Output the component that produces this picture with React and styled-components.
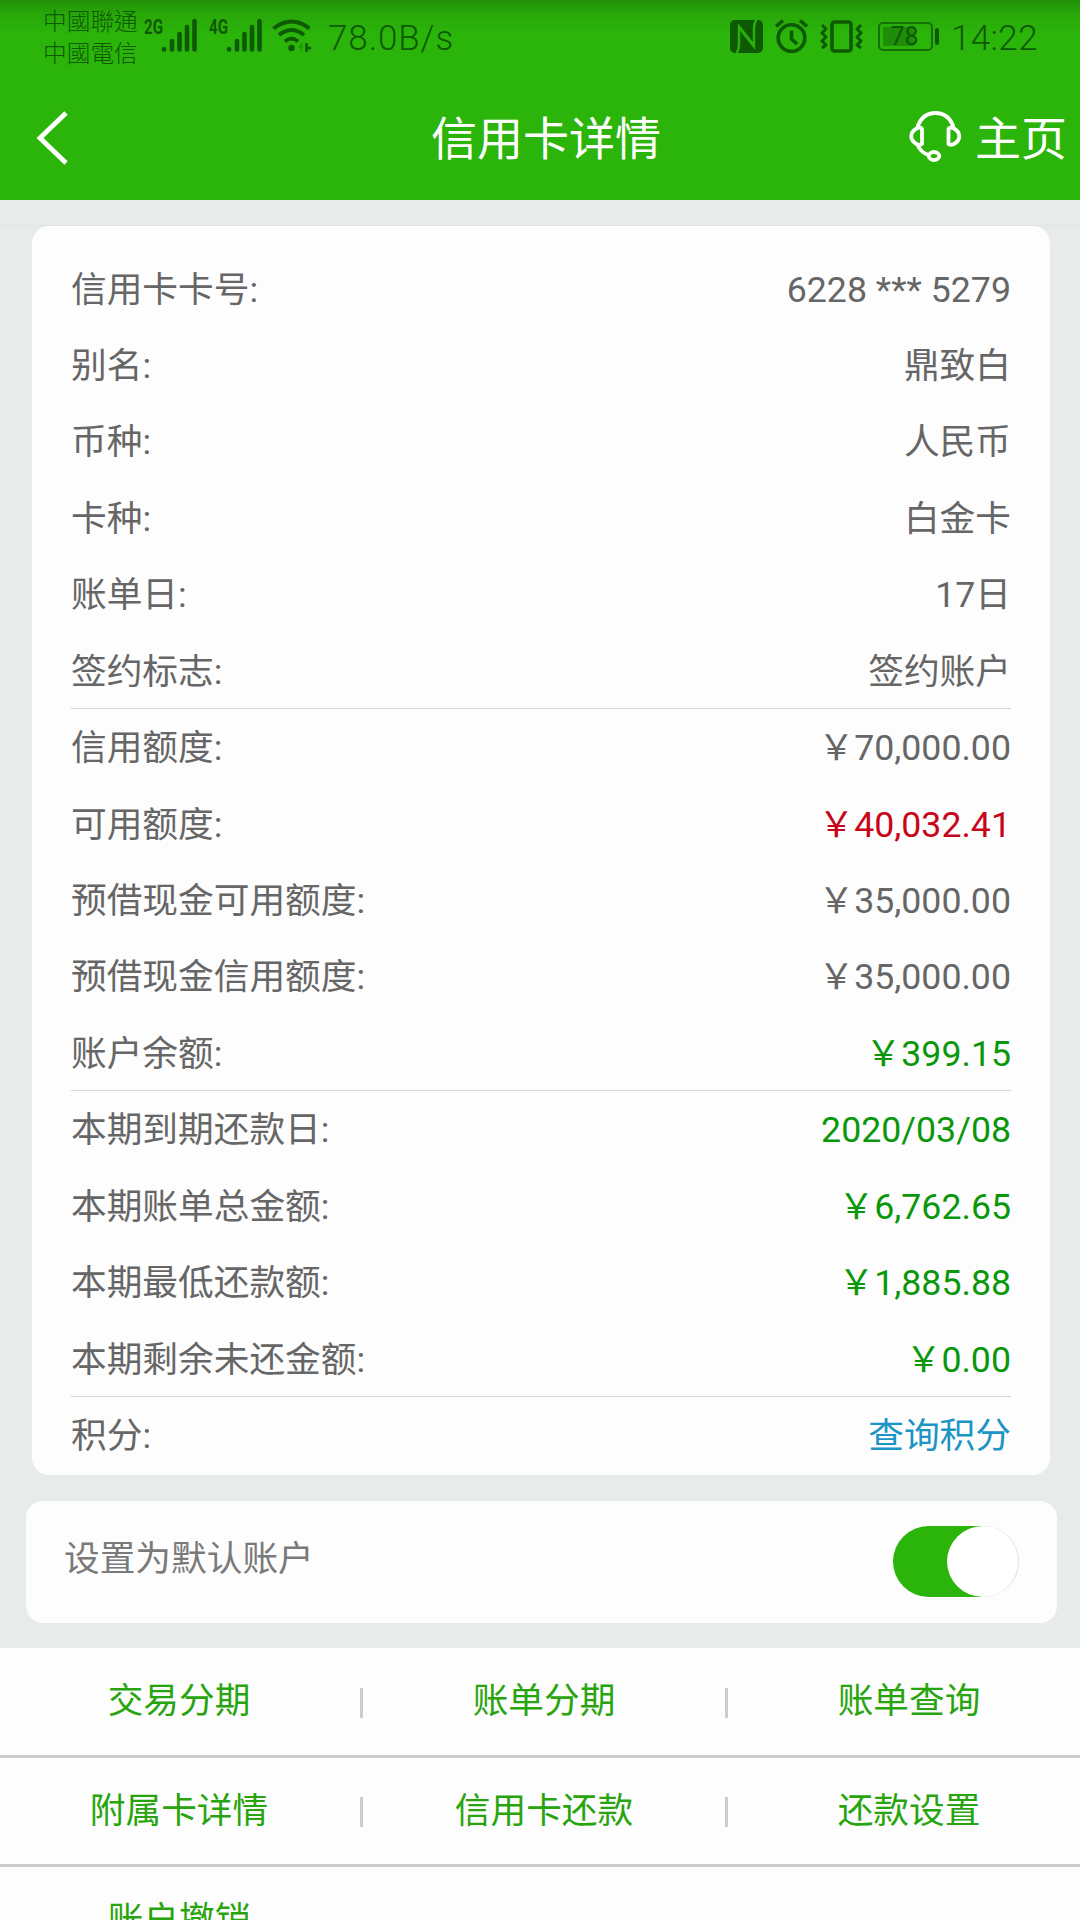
import React, { useState } from 'react';
import styled, { createGlobalStyle } from 'styled-components';

const GlobalStyle = createGlobalStyle`
  * {
    box-sizing: border-box;
  }
  body {
    margin: 0;
    height: 1920px;
    overflow: hidden;
    background: #e7ebea;
    font-family: Roboto, 'Noto Sans CJK SC', sans-serif;
  }
`;

const Screen = styled.div`
  width: 1080px;
  height: 1920px;
  overflow: hidden;
`;

const Header = styled.header`
  height: 200px;
  background: linear-gradient(#219007 0, #28a809 14px, #2bb40a 34px);
`;

const StatusBar = styled.div`
  display: flex;
  justify-content: space-between;
  height: 74px;
  padding: 0 42px 0 43px;
  color: #0e5a04;
`;

const StatusGroup = styled.div`
  display: flex;
  align-items: flex-start;
`;

const Carriers = styled.div`
  width: 101px;
  padding-top: 4px;
  font-family: 'Noto Sans CJK TC', sans-serif;
  font-size: 23.7px;
  font-weight: 300;
  line-height: 32px;
  white-space: nowrap;
`;

const Network = styled.span`
  width: 17px;
  margin-top: 17px;
  margin-left: ${props => props.$left || 0}px;
  font-size: 21px;
  font-weight: 700;
  line-height: 20px;
  white-space: nowrap;
  transform: scaleX(0.72);
  transform-origin: left;
`;

const StatusIcon = styled.svg`
  display: block;
  flex: none;
  margin-left: ${props => props.$left || 0}px;
`;

const StatusText = styled.span`
  margin-left: ${props => props.$left}px;
  padding-top: 18px;
  font-size: ${props => props.$size}px;
  line-height: 42px;
  font-weight: ${props => props.$weight || 300};
  letter-spacing: ${props => props.$spacing || 0}px;
  white-space: nowrap;
`;

const Battery = styled.div`
  display: flex;
  align-items: center;
  margin: 22px 0 0 14px;

  &::after {
    content: '';
    width: 4px;
    height: 17px;
    margin-left: 2px;
    border-radius: 2px;
    background: #0e5a04;
  }
`;

const BatteryBody = styled.div`
  width: 55px;
  height: 29px;
  padding-right: 2px;
  border: 2px solid #15700a;
  border-radius: 5px;
  background: linear-gradient(#1f8d08, #1f8d08) 3px 3px / 31px 19px no-repeat;
  font-size: 25px;
  line-height: 26px;
  text-align: center;
`;

const NavBar = styled.nav`
  display: grid;
  grid-template-columns: 431px 230px 1fr;
  align-items: center;
  height: 126px;
  color: #fff;
`;

const BackButton = styled.button`
  width: 80px;
  height: 80px;
  padding: 2px 0 0 0;
  border: 0;
  background: none;
  text-align: left;

  svg {
    display: block;
    margin-left: 35px;
  }
`;

const Title = styled.h1`
  margin: 0;
  padding-top: 4px;
  font-size: 46px;
  font-weight: 400;
  line-height: 60px;
  white-space: nowrap;
`;

const HomeLink = styled.div`
  display: flex;
  align-items: center;
  justify-content: flex-end;
  gap: 13px;
  padding-right: 13px;
  font-size: 46px;
  line-height: 60px;

  span {
    padding-top: 4px;
  }
`;

const Content = styled.main`
  margin-top: 25px;
  border-top: 1px solid #e0e3e3;
`;

const Card = styled.section`
  width: 1018px;
  height: 1249px;
  margin-left: 32px;
  padding: 24px 39px 0 39px;
  border-radius: 17px;
  background: #fdfdfd;
`;

const Row = styled.div`
  display: flex;
  justify-content: space-between;
  height: 76.45px;
  padding-top: 13.5px;
  border-bottom: 1px solid ${props => (props.$divided ? '#d4d4d4' : 'transparent')};
  color: #666;
  font-size: 35.7px;
  line-height: 52px;
`;

const Value = styled.span`
  color: ${props => props.$color || '#666'};
`;

const DefaultCard = styled.section`
  display: flex;
  align-items: center;
  justify-content: space-between;
  width: 1031px;
  height: 122px;
  margin: 26px 0 25px 26px;
  padding: 0 38px 2px 38px;
  border-radius: 17px;
  background: #fdfdfd;
  color: #7a7a7a;
  font-size: 35.7px;
  line-height: 52px;

  > span {
    padding-bottom: 5px;
  }
`;

const Toggle = styled.button`
  display: flex;
  justify-content: ${props => (props.$on ? 'flex-end' : 'flex-start')};
  width: 126px;
  height: 71px;
  padding: 0;
  border: 0;
  border-radius: 36px;
  background: linear-gradient(to right, ${props => (props.$on ? '#2bb40a' : '#ccc')} 92px, #e4e4e4 92px);
`;

const Knob = styled.span`
  width: 72px;
  height: 71px;
  border-radius: 50%;
  border-right: 1px solid #e4e4e4;
  background: #fff;
`;

const Actions = styled.section`
  background: #fdfdfd;
`;

const ActionRow = styled.div`
  display: flex;
  align-items: center;
  height: 109.5px;
  margin-left: -2px;
  border-bottom: 3px solid #cbcbcb;
`;

const Action = styled.div`
  flex: none;
  width: 362px;
  color: #28a50e;
  font-size: 35.7px;
  line-height: 52px;
  text-align: center;
`;

const Separator = styled.i`
  flex: none;
  width: 3px;
  height: 30px;
  margin-top: 3px;
  background: #cdcdcd;
`;

const GREEN = '#0b970b';
const RED = '#c7061a';
const BLUE = '#1a95c4';

const rows = [
  { label: '信用卡卡号', value: '6228 *** 5279' },
  { label: '别名', value: '鼎致白' },
  { label: '币种', value: '人民币' },
  { label: '卡种', value: '白金卡' },
  { label: '账单日', value: '17日' },
  { label: '签约标志', value: '签约账户', divided: true },
  { label: '信用额度', value: '￥70,000.00' },
  { label: '可用额度', value: '￥40,032.41', color: RED },
  { label: '预借现金可用额度', value: '￥35,000.00' },
  { label: '预借现金信用额度', value: '￥35,000.00' },
  { label: '账户余额', value: '￥399.15', color: GREEN, divided: true },
  { label: '本期到期还款日', value: '2020/03/08', color: GREEN },
  { label: '本期账单总金额', value: '￥6,762.65', color: GREEN },
  { label: '本期最低还款额', value: '￥1,885.88', color: GREEN },
  { label: '本期剩余未还金额', value: '￥0.00', color: GREEN, divided: true },
  { label: '积分', value: '查询积分', color: BLUE },
];

const actions = [
  ['交易分期', '账单分期', '账单查询'],
  ['附属卡详情', '信用卡还款', '还款设置'],
  ['账户撤销'],
];

function Signal() {
  return (
    <StatusIcon width="37" height="54" fill="none" stroke="currentColor" strokeWidth="4.6" strokeLinecap="round">
      <path d="M3 49v.5M11 41v8.5M18.5 34v15.5M26 27v22.500M33.500 21v28.500" />
    </StatusIcon>
  );
}

function Wifi() {
  return (
    <StatusIcon $left={9} width="40" height="54" fill="none" stroke="currentColor" strokeWidth="4">
      <path d="M1.500 28.500Q19.500 14.500 37.500 28.500M7 35Q19.500 25 32 35M13 41.500Q19.500 35.500 26 41.500" />
      <circle cx="19.500" cy="48" r="3.200" fill="currentColor" stroke="none" />
      <path d="M34.500 43v9M34 48h5" strokeWidth="2.500" />
      <path d="M29.500 43v8M27 47h3" strokeWidth="1.500" opacity=".4" />
    </StatusIcon>
  );
}

function Nfc() {
  return (
    <StatusIcon width="33" height="54">
      <rect y="20" width="33" height="33" rx="5" fill="currentColor" />
      <path
        d="M6.500 53C9 50 9 47 9 43V26.500L23 44M26.500 20C24 23 24 26 24 30V46.500L10 29"
        fill="none"
        stroke="#2aaf0a"
        strokeWidth="2.400"
      />
    </StatusIcon>
  );
}

function Alarm() {
  return (
    <StatusIcon $left={12} width="33" height="54" fill="none" stroke="currentColor" strokeWidth="3.600">
      <circle cx="16.500" cy="38" r="13.300" />
      <path d="M16.500 30.500v8.500l5.500 5M1 26.500l7-6M32 26.500l-7-6" />
    </StatusIcon>
  );
}

function Vibrate() {
  return (
    <StatusIcon $left={12} width="44" height="54" fill="none" stroke="currentColor" strokeWidth="3.600" strokeLinejoin="round">
      <rect x="12" y="22" width="19" height="29" rx="2.500" />
      <path d="M2 25l4 4-4 4 4 4-4 4 4 4-4 3M41 25l-4 4 4 4-4 4 4 4-4 4 4 3" strokeWidth="3" />
    </StatusIcon>
  );
}

function Headset() {
  return (
    <svg width="53" height="54" viewBox="0 0 53 54" fill="none" stroke="#fff" strokeWidth="3.800">
      <path d="M8.500 17C12 7 18 3 26.500 3S41 7 44.500 17" />
      <path d="M13 19.500v14.500c-1 1-3 1-5.500 0C.5 30 .5 22.500 7.500 18.500c2.500-1.500 5.500-1 5.500 1z" />
      <path d="M39.500 19.500v14.500c1 1 3 1 5.500 0 7-4 7-11.500 0-15.500-2.500-1.500-5.500-1-5.500 1z" />
      <path d="M8.500 34.500Q11 42 19.500 45" />
      <ellipse cx="25" cy="46" rx="5.300" ry="4" />
    </svg>
  );
}

export default function App() {
  const [isDefault, setIsDefault] = useState(true);

  return (
    <>
      <GlobalStyle />
      <Screen>
        <Header>
          <StatusBar>
            <StatusGroup>
              <Carriers>
                <div>中國聯通</div>
                <div>中國電信</div>
              </Carriers>
              <Network>2G</Network>
              <Signal />
              <Network $left={11}>4G</Network>
              <Signal />
              <Wifi />
              <StatusText $left={16} $size={35} $spacing={0.9}>78.0B/s</StatusText>
            </StatusGroup>
            <StatusGroup>
              <Nfc />
              <Alarm />
              <Vibrate />
              <Battery>
                <BatteryBody>78</BatteryBody>
              </Battery>
              <StatusText $left={12} $size={35} $spacing={0.4}>14:22</StatusText>
            </StatusGroup>
          </StatusBar>
          <NavBar>
            <BackButton>
              <svg width="36" height="54" viewBox="0 0 36 54" fill="none" stroke="#fff" strokeWidth="4.800">
                <path d="M31 2L5 27l26 25" />
              </svg>
            </BackButton>
            <Title>信用卡详情</Title>
            <HomeLink>
              <Headset />
              <span>主页</span>
            </HomeLink>
          </NavBar>
        </Header>
        <Content>
          <Card>
            {rows.map(row => (
              <Row key={row.label} $divided={row.divided}>
                <span>{row.label}:</span>
                <Value $color={row.color}>{row.value}</Value>
              </Row>
            ))}
          </Card>
          <DefaultCard>
            <span>设置为默认账户</span>
            <Toggle $on={isDefault} onClick={() => setIsDefault(!isDefault)}>
              <Knob />
            </Toggle>
          </DefaultCard>
          <Actions>
            {actions.map(items => (
              <ActionRow key={items[0]}>
                {items.map((item, i) => (
                  <React.Fragment key={item}>
                    {i > 0 && <Separator />}
                    <Action>{item}</Action>
                  </React.Fragment>
                ))}
              </ActionRow>
            ))}
          </Actions>
        </Content>
      </Screen>
    </>
  );
}
